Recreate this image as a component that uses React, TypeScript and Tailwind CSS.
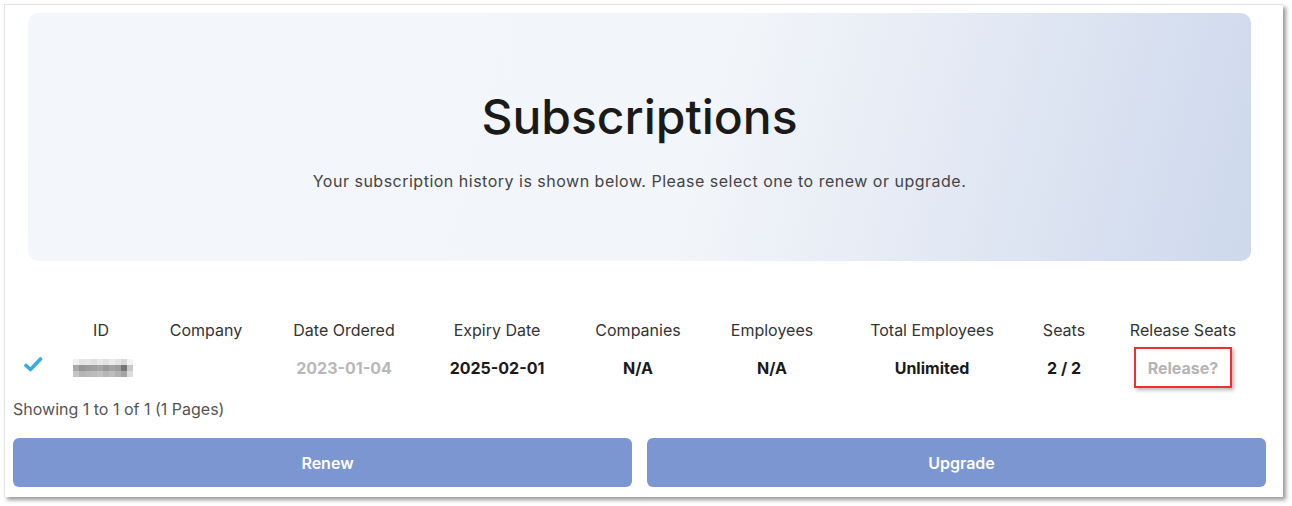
const columns = [
  { label: '', w: 'w-[40px]' },
  { label: 'ID', w: 'w-[96px]' },
  { label: 'Company', w: 'w-[114px]' },
  { label: 'Date Ordered', w: 'w-[162px]' },
  { label: 'Expiry Date', w: 'w-[144px]' },
  { label: 'Companies', w: 'w-[138px]' },
  { label: 'Employees', w: 'w-[130px]' },
  { label: 'Total Employees', w: 'w-[190px]' },
  { label: 'Seats', w: 'w-[74px]' },
  { label: 'Release Seats', w: 'w-[164px]' },
];

// blurred-out id, drawn as a pixel mosaic
const mosaic = [
  ['#f0f0f0', '#e4e4e4', '#e6e6e6', '#e0e0e0', '#e8e8e8', '#e2e2e2', '#ececec', '#e4e4e4', '#d8d8d8', '#f4f4f4'],
  ['#a8a8a8', '#969696', '#9c9c9c', '#a0a0a0', '#a6a6a6', '#9a9a9a', '#a4a4a4', '#9e9e9e', '#767676', '#c8c8c8'],
  ['#c4c4c4', '#b4b4b4', '#b8b8b8', '#bcbcbc', '#c0c0c0', '#b6b6b6', '#bebebe', '#b2b2b2', '#a4a4a4', '#dcdcdc'],
];

function CheckIcon() {
  return (
    <svg width="20" height="16" viewBox="0 0 20 16" fill="none">
      <path d="M3 9.5l4.5 4L17.5 3" stroke="#3aabe0" strokeWidth="3.6" strokeLinecap="round" strokeLinejoin="round" />
    </svg>
  );
}

export default function App() {
  return (
    <div className="w-[1292px] h-[506px] bg-white pt-[4px] pl-[4px]" style={{ fontFamily: 'Inter, "Liberation Sans", sans-serif' }}>
      <div className="w-[1279px] h-[493px] bg-white border-l border-t border-[#e2e2e2] shadow-[3px_3px_4px_rgba(0,0,0,0.4)] flex flex-col">
        {/* 상단 배너 */}
        <section className="ml-[23px] mt-[8px] w-[1223px] h-[248px] rounded-[10px] bg-[linear-gradient(105deg,#f3f6fa_0%,#f2f5f9_55%,#e3e9f4_75%,#cdd8ec_100%)] flex flex-col items-center pt-[80px]">
          <h1 className="text-[48px] leading-[48px] font-medium text-[#1a1a1a]">Subscriptions</h1>
          <p className="mt-[30px] text-[16px] leading-[20px] text-[#444] tracking-[0.5px]">
            Your subscription history is shown below. Please select one to renew or upgrade.
          </p>
        </section>

        {/* 테이블 */}
        <div className="ml-[8px] mt-[57px]">
          <div className="flex h-[24px] items-center text-[16px] text-[#333]">
            {columns.map((c) => (
              <div key={c.label} className={`${c.w} text-center`}>{c.label}</div>
            ))}
          </div>
          <div className="flex h-[51px] items-center text-[16px] font-bold text-[#1a1a1a]">
            <div className="w-[40px] flex justify-center -mt-[8px]"><CheckIcon /></div>
            <div className="w-[96px] flex justify-center pl-[4px]">
              <div className="flex flex-col">
                {mosaic.map((row, i) => (
                  <div key={i} className="flex">
                    {row.map((col, j) => (
                      <div key={j} className="w-[6px] h-[6px]" style={{ backgroundColor: col }} />
                    ))}
                  </div>
                ))}
              </div>
            </div>
            <div className="w-[114px]" />
            <div className="w-[162px] text-center text-[#b8b8b8]">2023-01-04</div>
            <div className="w-[144px] text-center">2025-02-01</div>
            <div className="w-[138px] text-center">N/A</div>
            <div className="w-[130px] text-center">N/A</div>
            <div className="w-[190px] text-center">Unlimited</div>
            <div className="w-[74px] text-center">2 / 2</div>
            <div className="w-[164px] flex justify-center">
              <button className="w-[98px] h-[41px] border-2 border-[#ee3036] bg-white text-[#b5b5b5] font-bold shadow-[2px_2px_4px_rgba(0,0,0,0.3)]">
                Release?
              </button>
            </div>
          </div>
          <div className="h-[22px] mt-[5px] text-[16px] leading-[22px] text-[#555]">Showing 1 to 1 of 1 (1 Pages)</div>
        </div>

        {/* 버튼 */}
        <div className="ml-[8px] mt-[18px] flex gap-[15px] w-[1253px]">
          <button className="flex-1 h-[49px] pl-[10px] rounded-[6px] bg-[#7b96d0] text-white text-[16px] font-semibold">Renew</button>
          <button className="flex-1 h-[49px] pl-[10px] rounded-[6px] bg-[#7b96d0] text-white text-[16px] font-semibold">Upgrade</button>
        </div>
      </div>
    </div>
  );
}
